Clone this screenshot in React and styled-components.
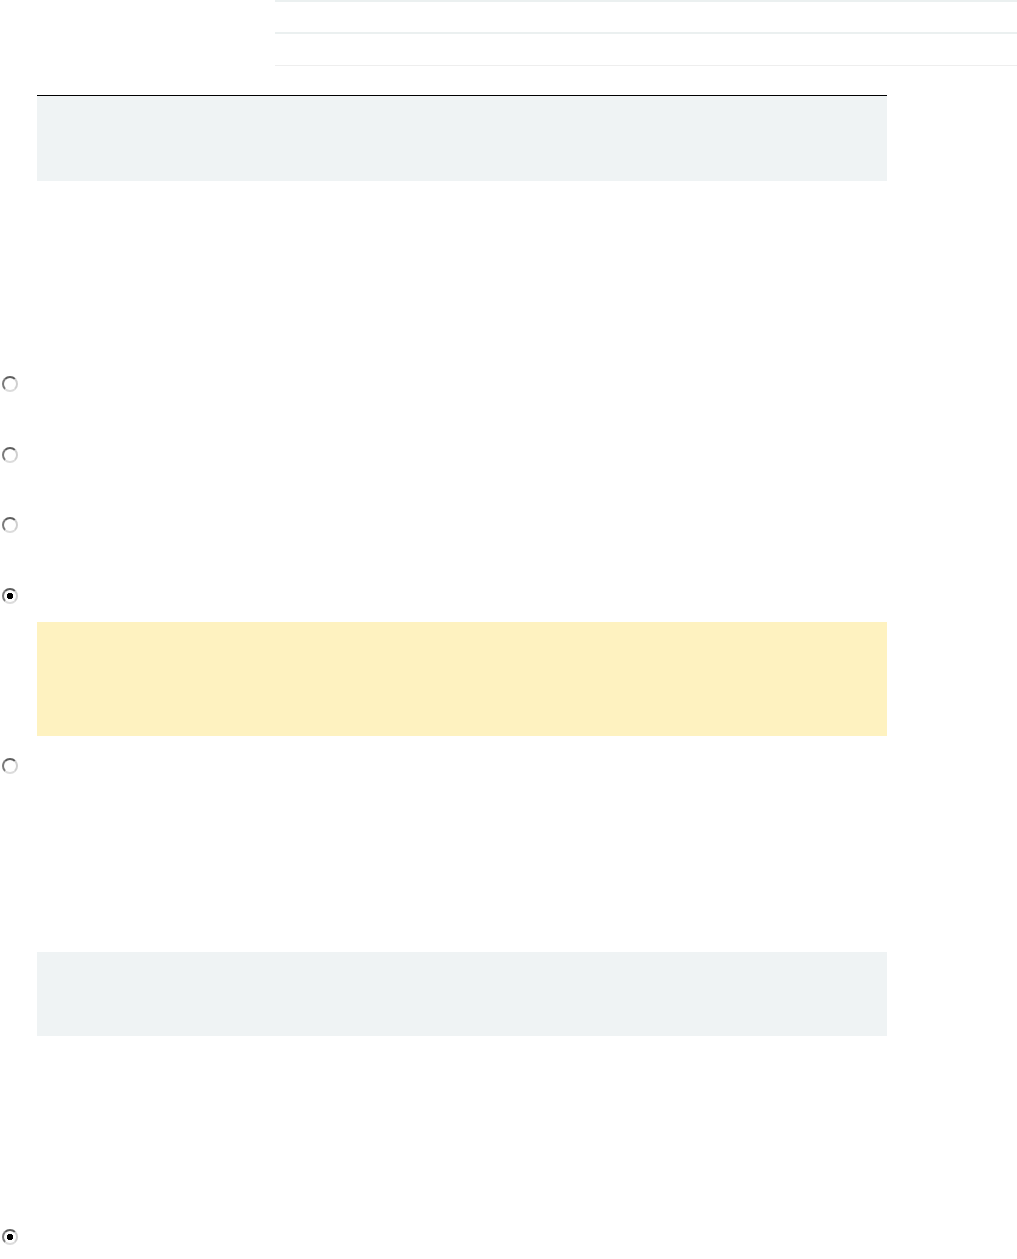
import React from 'react';
import styled, { createGlobalStyle } from 'styled-components';

const GlobalStyle = createGlobalStyle`
    *, *::before, *::after {
        box-sizing: border-box;
    }
    body {
        margin: 0;
        background: #ffffff;
        font-family: "Liberation Sans", Arial, sans-serif;
        color: #ffffff;
    }
`;

const Page = styled.div`
    display: flex;
    flex-direction: column;
    width: 1017px;
    min-height: 1259px;
`;

const Table = styled.div`
    display: flex;
    flex-direction: column;
    margin-left: 275px;
    border-bottom: 1px solid #eeeeee;
`;

const TableRow = styled.div`
    height: ${props => props.h}px;
    border-top: 2px solid #ebf0f0;
`;

const CodeBox = styled.div`
    width: 850px;
    margin-left: 37px;
    margin-top: ${props => props.top}px;
    height: ${props => props.h}px;
    background: #eff3f4;
    border-top: ${props => (props.ruled ? '1px solid #000000' : 'none')};
`;

const Note = styled.div`
    width: 850px;
    margin-left: 37px;
    margin-top: ${props => props.top}px;
    height: 114px;
    background: #fef2c0;
`;

const Option = styled.label`
    display: flex;
    align-items: flex-start;
    margin-top: ${props => props.top}px;
    height: 14px;
`;

const Radio = styled.input.attrs({ type: 'radio' })`
    appearance: none;
    width: 16px;
    height: 16px;
    margin: 0 0 0 2px;
    border-radius: 50%;
    border: 2px solid;
    border-color: #5e5e5e #cfcfcf #dcdcdc #7a7a7a;
    background: #ffffff;

    &:checked {
        background: radial-gradient(circle, #000000 0 3px, #ffffff 3.5px);
    }
`;

const options = [
    { top: 195, checked: false },
    { top: 57, checked: false },
    { top: 56, checked: false },
    { top: 57, checked: true },
];

export default function App() {
    return (
        <Page>
            <GlobalStyle />
            <Table>
                <TableRow h={32} />
                <TableRow h={33} />
            </Table>
            <CodeBox ruled top={29} h={86} />
            {options.map((o, i) => (
                <Option key={i} top={o.top}>
                    <Radio name="q1" defaultChecked={o.checked} />
                </Option>
            ))}
            <Note top={20} />
            <Option top={22}>
                <Radio name="q1" />
            </Option>
            <CodeBox top={180} h={84} />
            <Option top={193}>
                <Radio name="q2" defaultChecked />
            </Option>
        </Page>
    );
}
